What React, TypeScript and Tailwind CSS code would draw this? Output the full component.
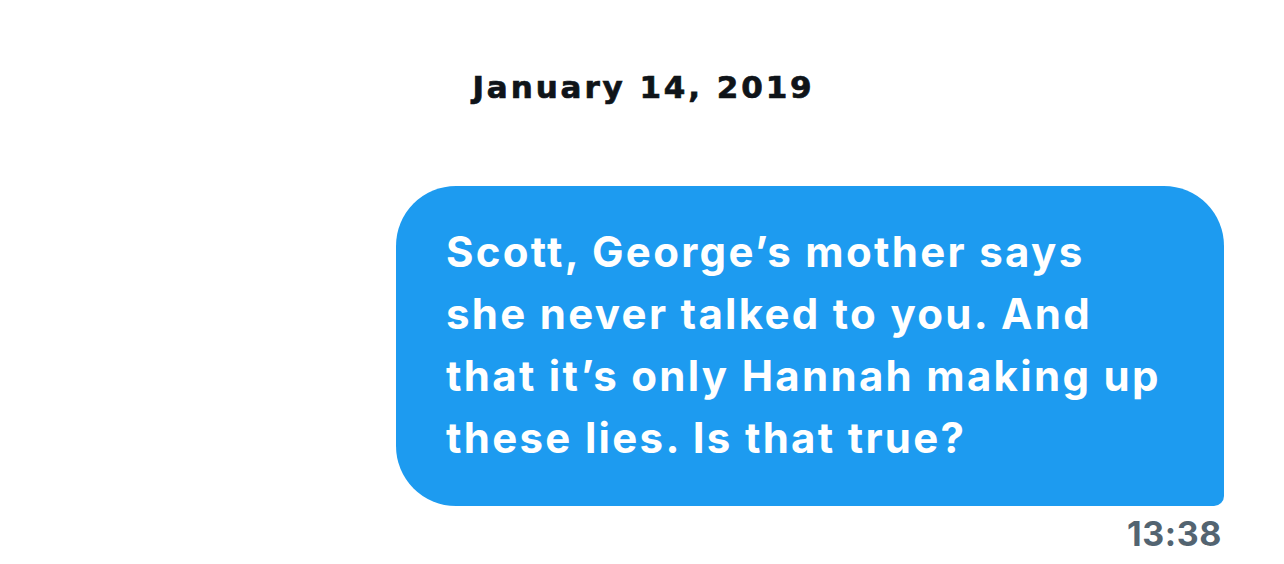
export default function App() {
  return (
    <div
      className="w-[1284px] h-[564px] bg-white overflow-hidden flex flex-col"
      style={{ fontFamily: "Inter, 'Noto Sans', sans-serif" }}
    >
      <div className="pt-[67px] pl-[3px] flex justify-center">
        <span
          className="text-[31px] leading-[40px] font-bold text-[#0f1419] tracking-[2.9px] [-webkit-text-stroke:0.7px_#0f1419]"
          style={{ fontFamily: "'DejaVu Sans', sans-serif" }}
        >
          January 14, 2019
        </span>
      </div>

      <div className="mt-[79px] mr-[60px] ml-auto w-[828px] rounded-[60px] rounded-br-[10px] bg-[#1d9bf0] pl-[50px] pr-[40px] pt-[35px] pb-[37px]">
        <p className="text-[42px] leading-[62px] font-bold text-white tracking-[2.3px]">
          Scott, George’s mother says
          <br />
          she never talked to you. And
          <br />
          that it’s only Hannah making up
          <br />
          these lies. Is that true?
        </p>
      </div>

      <div className="mr-[62px] mt-[8px] flex justify-end">
        <span className="text-[34px] leading-[40px] font-bold text-[#536471] tracking-[0.6px]">13:38</span>
      </div>
    </div>
  );
}
